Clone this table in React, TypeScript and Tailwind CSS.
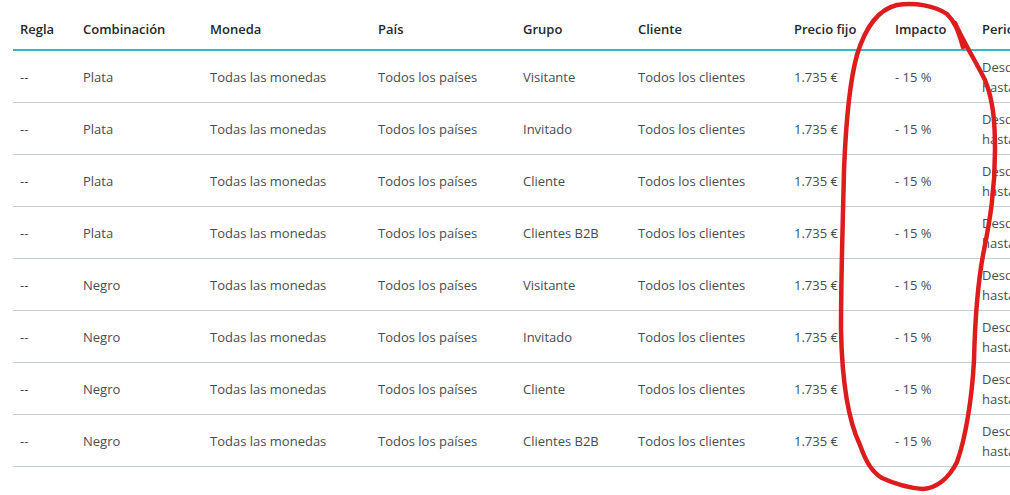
import React from "react";

interface Rule {
  combination: string,
  group: string
}

const rules: Rule[] = [
  { combination: "Plata", group: "Visitante" },
  { combination: "Plata", group: "Invitado" },
  { combination: "Plata", group: "Cliente" },
  { combination: "Plata", group: "Clientes B2B" },
  { combination: "Negro", group: "Visitante" },
  { combination: "Negro", group: "Invitado" },
  { combination: "Negro", group: "Cliente" },
  { combination: "Negro", group: "Clientes B2B" },
];

const cols = "grid grid-cols-[63px_127px_168px_145px_115px_156px_101px_87px_180px]";

const headers = ["Regla", "Combinación", "Moneda", "País", "Grupo", "Cliente", "Precio fijo", "Impacto", "Periodo"];

const Scribble: React.FC = () => (
  <svg
    className="absolute inset-0 pointer-events-none"
    width="1010"
    height="495"
    viewBox="0 0 1010 495"
  >
    <path
      d="M963,47 C958,30 955,22 947,14 C935,6 915,2 897,5 C880,9 866,25 857,55 C850,80 846,120 844,170 C843,220 841,270 841,330 C842,380 848,420 860,445 C866,462 872,472 882,478 C895,484 910,488 923,489 C935,488 948,480 957,462 C965,440 972,400 974,360 C975,320 978,280 984,250 C990,220 995,190 995,150 C995,120 993,100 985,80 C975,60 965,45 955,23"
      fill="none"
      stroke="#dd1c1c"
      strokeWidth="4.5"
      strokeLinecap="round"
      strokeLinejoin="round"
    />
  </svg>
);

const App: React.FC = () => {
  return (
    <div className="relative w-[1010px] h-[495px] overflow-hidden bg-white font-['Open_Sans',sans-serif] text-[13px] leading-5">
      <div className="pl-[13px]">
        <div className={`${cols} h-[51px] border-b-2 border-[#3db5c8] pt-[9px] items-center font-semibold text-[#25282c]`}>
          {headers.map((h) => (
            <div key={h} className="px-[7px] whitespace-nowrap">{h}</div>
          ))}
        </div>
        {rules.map((r, i) => (
          <div key={i} className={`${cols} h-[52px] border-b border-[#c3cfd3] items-center text-[#474c52]`}>
            <div className="px-[7px]">--</div>
            <div className="px-[7px]">{r.combination}</div>
            <div className="px-[7px] whitespace-nowrap">Todas las monedas</div>
            <div className="px-[7px] whitespace-nowrap">Todos los países</div>
            <div className="px-[7px] whitespace-nowrap">{r.group}</div>
            <div className="px-[7px] whitespace-nowrap">Todos los clientes</div>
            <div className="px-[7px] whitespace-nowrap">1.735 €</div>
            <div className="px-[7px] whitespace-nowrap">- 15 %</div>
            <div className="px-[7px] whitespace-nowrap">
              <div>Desde 2023-01-01</div>
              <div>hasta 2023-12-31</div>
            </div>
          </div>
        ))}
      </div>
      <Scribble />
    </div>
  );
};

export default App;
